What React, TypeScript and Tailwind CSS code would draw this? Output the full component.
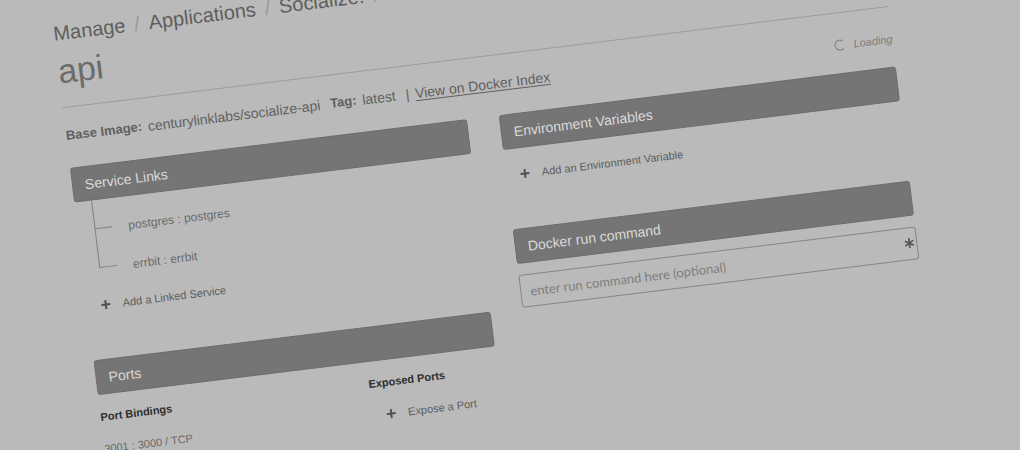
import type { ReactNode } from "react";

function PlusIcon() {
  return (
    <svg viewBox="0 0 10 10" className="size-2.5 shrink-0" aria-hidden="true">
      <path d="M5 0.5V9.5M0.5 5H9.5" stroke="#505050" strokeWidth="2" fill="none" />
    </svg>
  );
}

function AddButton({ children }: { children: ReactNode }) {
  return (
    <button type="button" className="flex h-4 items-center gap-3 pl-3.5 text-[11px] leading-4 whitespace-nowrap text-[#5c5c5c]">
      <PlusIcon />
      {children}
    </button>
  );
}

function PanelTitle({ children }: { children: ReactNode }) {
  return (
    <h2 className="flex h-[35px] items-center rounded-[3px] border border-[#6c6c6c] bg-[#757575] px-3 text-sm text-[#dadada]">
      {children}
    </h2>
  );
}

function Slash() {
  return <span className="text-[#999999]">/</span>;
}

export default function App() {
  return (
    <div className="h-screen min-h-[450px] overflow-hidden bg-[#bababa] pt-[22px] pr-[136px] pl-[52px] font-['Liberation_Sans',Arial,sans-serif] text-[#606060]">
      <main className="origin-top-left -rotate-7">
        <nav aria-label="Breadcrumb" className="flex gap-[9px] text-xl leading-6 whitespace-nowrap text-[#5e5e5e]">
          <a href="#manage">Manage</a>
          <Slash />
          <a href="#applications">Applications</a>
          <Slash />
          <a href="#socialize">Socialize.</a>
          <Slash />
        </nav>

        <h1 className="mt-1.5 border-b border-[#9c9c9c] pb-4 text-[34px] leading-10 text-[#6c6c6c]">api</h1>

        <div className="mt-[18px] flex h-[22px] justify-between">
          <p className="flex gap-1.5 text-sm leading-5 whitespace-nowrap">
            <strong className="text-[13px]">Base Image:</strong>
            <span>centurylinklabs/socialize-api</span>
            <strong className="ml-1 text-[13px]">Tag:</strong>
            <span>latest</span>
            <span className="ml-1">|</span>
            <a href="#docker-index" className="underline underline-offset-2">View on Docker Index</a>
          </p>
          <p role="status" className="flex items-center gap-2 self-end text-[11px] leading-4 italic text-[#7c7c7c]">
            <svg viewBox="0 0 12 12" className="size-3" aria-hidden="true">
              <path d="M9.8 2.4A5 5 0 1 0 9.8 9.6" fill="none" stroke="#858585" strokeWidth="1.2" />
            </svg>
            Loading
          </p>
        </div>

        <div className="mt-5 grid grid-cols-2 gap-8">
          <div>
            <section>
              <PanelTitle>Service Links</PanelTitle>
              <ul className="pl-[17px] text-xs leading-4 text-[#6a6a6a]">
                <li className="flex h-[29px] items-end gap-4">
                  <span className="h-full w-[18px] border-b border-l border-[#808080]" />
                  <span className="-mb-2">postgres : postgres</span>
                </li>
                <li className="flex h-[39px] items-end gap-4">
                  <span className="h-full w-[18px] border-b border-l border-[#808080]" />
                  <span className="-mb-2">errbit : errbit</span>
                </li>
              </ul>
              <div className="mt-[29px]">
                <AddButton>Add a Linked Service</AddButton>
              </div>
            </section>

            <section className="mt-[46px]">
              <PanelTitle>Ports</PanelTitle>
              <div className="mt-3.5 grid grid-cols-[27fr_13fr] text-[11px] leading-4">
                <div>
                  <h3 className="font-bold text-[#2e2e2e]">Port Bindings</h3>
                  <p className="mt-4 text-[#6a6a6a]">3001 : 3000 / TCP</p>
                </div>
                <div>
                  <h3 className="mb-4 font-bold text-[#2e2e2e]">Exposed Ports</h3>
                  <AddButton>Expose a Port</AddButton>
                </div>
              </div>
            </section>
          </div>

          <div>
            <section>
              <PanelTitle>Environment Variables</PanelTitle>
              <div className="mt-[18px]">
                <AddButton>Add an Environment Variable</AddButton>
              </div>
            </section>

            <section className="mt-[46px]">
              <PanelTitle>Docker run command</PanelTitle>
              <div className="relative mt-[11px]">
                <input
                  type="text"
                  aria-label="Docker run command"
                  placeholder="enter run command here (optional)"
                  className="block h-[33px] w-full rounded-[3px] border border-[#858585] bg-transparent px-[9px] font-['Lato',sans-serif] text-[13px] placeholder:text-[#7e7e7e]"
                />
                <svg viewBox="0 0 12 12" className="absolute top-2.5 right-0.5 size-3" aria-hidden="true">
                  <path d="M6 1V11M1.7 3.5L10.3 8.5M10.3 3.5L1.7 8.5" stroke="#585858" strokeWidth="1.7" fill="none" />
                </svg>
              </div>
            </section>
          </div>
        </div>
      </main>
    </div>
  );
}
